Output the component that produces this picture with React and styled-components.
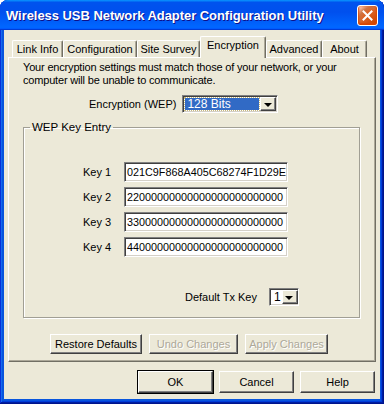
import { Fragment } from "react";
import styled, { createGlobalStyle } from "styled-components";

const GlobalStyle = createGlobalStyle`
  html, body {
    margin: 0;
    padding: 0;
    background: #ffffff;
  }
  body {
    font-family: "Liberation Sans", Arial, sans-serif;
    font-size: 11px;
    color: #000;
  }
  * {
    box-sizing: border-box;
  }
`;

const Window = styled.div`
  width: 384px;
  height: 404px;
  display: flex;
  flex-direction: column;
  background: #0855dd;
  border-radius: 8px 8px 0 0;
  overflow: hidden;
  box-shadow: inset -1px -1px #00138c, inset 1px 1px #0831d9,
    inset -2px -2px #001ea0, inset 2px 2px #166aee, inset -3px -3px #003bda,
    inset 3px 3px #0855dd;
`;

const TitleBar = styled.div`
  height: 30px;
  flex: none;
  display: flex;
  align-items: center;
  justify-content: space-between;
  padding: 1px 6px 0 6px;
  background: linear-gradient(
    180deg,
    #0997ff,
    #0053ee 8%,
    #0050ee 40%,
    #06f 88%,
    #06f 93%,
    #005bff 95%,
    #003dd7 96%,
    #003dd7
  );
`;

const Title = styled.span`
  color: #fff;
  font-weight: bold;
  font-size: 13px;
  letter-spacing: -0.05px;
  text-shadow: 1px 1px #0f1089;
  white-space: nowrap;
`;

const CloseButton = styled.div`
  width: 21px;
  height: 21px;
  border: 1px solid #fff;
  border-radius: 3px;
  display: flex;
  align-items: center;
  justify-content: center;
  background: radial-gradient(
    circle at 90% 90%,
    #cc4600 0,
    #dc6527 55%,
    #cd7546 70%,
    #ffccb2 90%,
    #fff 100%
  );
  box-shadow: inset 0 -1px 2px 1px #da4600;
`;

const Body = styled.div`
  flex: 1;
  margin: 0 4px 5px 4px;
  padding: 6px 4px 0 4px;
  background: #ece9d8;
  display: flex;
  flex-direction: column;
`;

const TabStrip = styled.div`
  height: 21px;
  display: flex;
  align-items: flex-end;
  padding-left: 4px;
  position: relative;
  z-index: 1;
`;

const Tab = styled.div`
  width: ${(p) => p.$w}px;
  height: ${(p) => (p.$active ? 22 : 17)}px;
  margin-bottom: ${(p) => (p.$active ? -1 : 0)}px;
  padding-top: 2px;
  background: #ece9d8;
  border-top: 1px solid #fff;
  border-left: 1px solid #fff;
  border-right: 1px solid #716f64;
  border-radius: 2px 2px 0 0;
  box-shadow: inset -1px 0 #aca899;
  text-align: center;
  font-size: 11px;
  line-height: 13px;
  white-space: nowrap;
`;

const Panel = styled.div`
  height: 305px;
  flex: none;
  display: flex;
  flex-direction: column;
  border-top: 1px solid #fff;
  border-left: 1px solid #fff;
  border-right: 1px solid #716f64;
  border-bottom: 1px solid #716f64;
  box-shadow: inset -1px -1px #aca899;
`;

const Notice = styled.p`
  margin: 3px 0 0 14px;
  line-height: 13px;
  letter-spacing: -0.18px;
  white-space: nowrap;
`;

const EncRow = styled.div`
  display: flex;
  align-items: center;
  gap: 6px;
  margin: 8px 0 0 80px;
`;

const Select = styled.div`
  width: ${(p) => p.$w}px;
  height: 18px;
  display: flex;
  padding: 1px;
  background: #fff;
  border-top: 1px solid #808080;
  border-left: 1px solid #808080;
  border-bottom: 1px solid #fff;
  border-right: 1px solid #fff;
  box-shadow: inset 1px 1px #404040, inset -1px -1px #d4d0c8;
`;

const SelectValue = styled.div`
  flex: 1;
  margin: 1px;
  padding-left: 2px;
  line-height: 12px;
  background: ${(p) => (p.$focused ? "#316ac5" : "#fff")};
  color: ${(p) => (p.$focused ? "#fff" : "#000")};
  outline: ${(p) => (p.$focused ? "1px dotted #c9b97a" : "none")};
  font-size: 12px;
`;

const ArrowButton = styled.div`
  width: 16px;
  flex: none;
  display: flex;
  align-items: center;
  justify-content: center;
  background: #ece9d8;
  border-top: 1px solid #fff;
  border-left: 1px solid #fff;
  border-right: 1px solid #404040;
  border-bottom: 1px solid #404040;
  box-shadow: inset -1px -1px #808080;
`;

const Arrow = styled.span`
  width: 0;
  height: 0;
  border-left: 4px solid transparent;
  border-right: 4px solid transparent;
  border-top: 4px solid #000;
  margin: 1px 1px 0 0;
`;

const Group = styled.fieldset`
  margin: 8px 15px 0 14px;
  padding: 0 0 11px 0;
  border: 1px solid #a19f94;
  box-shadow: inset 1px 1px #fff, 1px 1px #fff;
  min-width: 0;
`;

const Legend = styled.legend`
  margin-left: 6px;
  padding: 0 2px;
  line-height: 13px;
  font-size: 11.5px;
`;

const KeyGrid = styled.div`
  display: grid;
  grid-template-columns: 41px 164px;
  row-gap: 5px;
  align-items: center;
  margin: 28px 0 0 59px;
`;

const KeyLabel = styled.label`
  font-size: 11px;
`;

const KeyInput = styled.div`
  height: 20px;
  padding: 2px 0 0 2px;
  background: #fff;
  border-top: 1px solid #808080;
  border-left: 1px solid #808080;
  border-bottom: 1px solid #fff;
  border-right: 1px solid #fff;
  box-shadow: inset 1px 1px #404040, inset -1px -1px #d4d0c8;
  font-size: 10.8px;
  line-height: 14px;
  white-space: nowrap;
`;

const TxRow = styled.div`
  display: flex;
  align-items: center;
  gap: 12px;
  margin: 31px 0 0 161px;
`;

const ActionRow = styled.div`
  display: flex;
  gap: 7px;
  margin: 16px 0 0 41px;
`;

const Button = styled.button`
  width: ${(p) => p.$w}px;
  height: ${(p) => p.$h}px;
  padding: 0;
  font-family: "Liberation Sans", Arial, sans-serif;
  font-size: 11px;
  color: ${(p) => (p.disabled ? "#aca899" : "#000")};
  text-shadow: ${(p) => (p.disabled ? "1px 1px #fff" : "none")};
  background: #ece9d8;
  border-top: 1px solid #fff;
  border-left: 1px solid #fff;
  border-right: 1px solid #404040;
  border-bottom: 1px solid #404040;
  box-shadow: ${(p) =>
    p.$default
      ? "0 0 0 1px #000, inset -1px -1px #808080"
      : "inset -1px -1px #808080"};
  white-space: nowrap;
`;

const Footer = styled.div`
  display: flex;
  justify-content: flex-end;
  gap: 6px;
  margin-top: 9px;
  padding-right: 1px;
`;

const tabs = [
  { label: "Link Info", w: 51 },
  { label: "Configuration", w: 74 },
  { label: "Site Survey", w: 63 },
  { label: "Encryption", w: 66, active: true },
  { label: "Advanced", w: 56 },
  { label: "About", w: 45 },
];

const keys = [
  "021C9F868A405C68274F1D29E",
  "22000000000000000000000000",
  "33000000000000000000000000",
  "44000000000000000000000000",
];

const App = () => {
  return (
    <>
      <GlobalStyle />
      <Window>
        <TitleBar>
          <Title>Wireless USB Network Adapter Configuration Utility</Title>
          <CloseButton>
            <svg width="11" height="11" viewBox="0 0 11 11">
              <path
                d="M1.5 1.5 L9.5 9.5 M9.5 1.5 L1.5 9.5"
                stroke="#fff"
                strokeWidth="2"
                strokeLinecap="square"
              />
            </svg>
          </CloseButton>
        </TitleBar>
        <Body>
          <TabStrip>
            {tabs.map((t) => (
              <Tab key={t.label} $w={t.w} $active={t.active}>
                {t.label}
              </Tab>
            ))}
          </TabStrip>
          <Panel>
            <Notice>
              Your encryption settings must match those of your network, or your
              <br />
              computer will be unable to communicate.
            </Notice>
            <EncRow>
              <span>Encryption (WEP)</span>
              <Select $w={96}>
                <SelectValue $focused>128 Bits</SelectValue>
                <ArrowButton>
                  <Arrow />
                </ArrowButton>
              </Select>
            </EncRow>
            <Group>
              <Legend>WEP Key Entry</Legend>
              <KeyGrid>
                {keys.map((k, i) => (
                  <Fragment key={k}>
                    <KeyLabel>Key {i + 1}</KeyLabel>
                    <KeyInput>{k}</KeyInput>
                  </Fragment>
                ))}
              </KeyGrid>
              <TxRow>
                <span>Default Tx Key</span>
                <Select $w={30}>
                  <SelectValue>1</SelectValue>
                  <ArrowButton>
                    <Arrow />
                  </ArrowButton>
                </Select>
              </TxRow>
            </Group>
            <ActionRow>
              <Button $w={92} $h={20}>
                Restore Defaults
              </Button>
              <Button $w={89} $h={20} disabled>
                Undo Changes
              </Button>
              <Button $w={83} $h={20} disabled>
                Apply Changes
              </Button>
            </ActionRow>
          </Panel>
          <Footer>
            <Button $w={75} $h={22} $default>
              OK
            </Button>
            <Button $w={75} $h={22}>
              Cancel
            </Button>
            <Button $w={75} $h={22}>
              Help
            </Button>
          </Footer>
        </Body>
      </Window>
    </>
  );
};

export default App;
